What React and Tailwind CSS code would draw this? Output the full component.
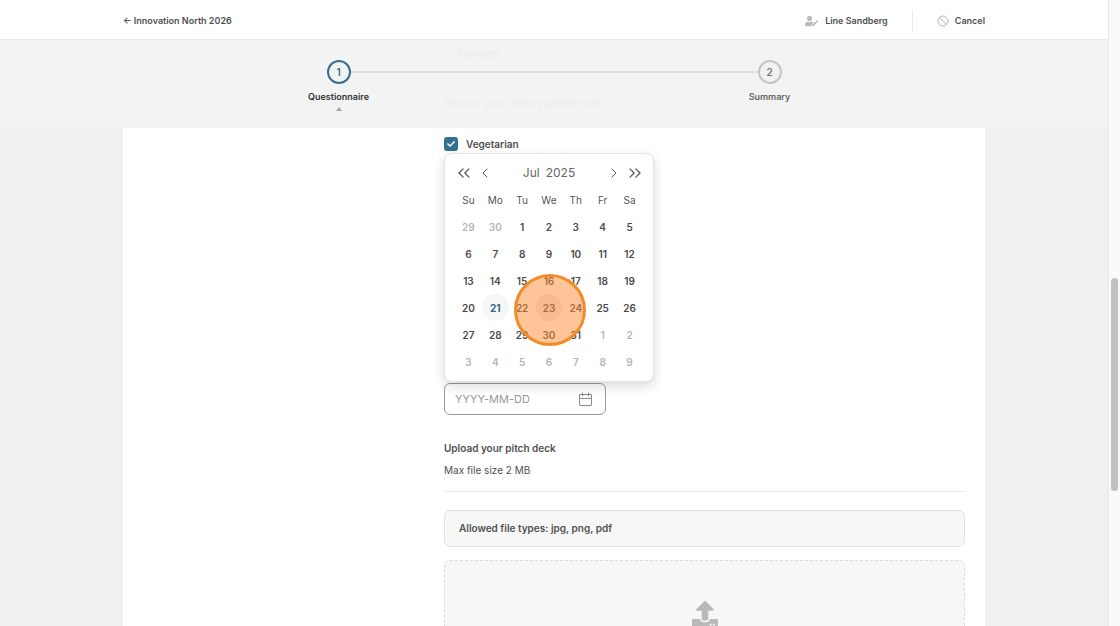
import React from "react";
import {
  Ban,
  ChevronDown,
  ChevronLeft,
  ChevronRight,
  ChevronsLeft,
  ChevronsRight,
} from "lucide-react";
import { FaCheck, FaUpload, FaUserEdit } from "react-icons/fa";

const WEEKDAYS = ["Su", "Mo", "Tu", "We", "Th", "Fr", "Sa"];

const WEEKS = [
  [29, 30, 1, 2, 3, 4, 5],
  [6, 7, 8, 9, 10, 11, 12],
  [13, 14, 15, 16, 17, 18, 19],
  [20, 21, 22, 23, 24, 25, 26],
  [27, 28, 29, 30, 31, 1, 2],
  [3, 4, 5, 6, 7, 8, 9],
];

function dayStyle(week, day) {
  const outside = (week === 0 && day > 7) || (week === 4 && day < 7) || week === 5;
  if (outside) return "font-semibold text-[#b4b4b4]";
  if (day === 21) return "font-bold bg-[#f6f6f6] text-[#2f6b8a]";
  if (day === 23) return "font-semibold bg-[#ededed] text-[#4a4a4a]";
  return "font-semibold text-[#4a4a4a]";
}

function TopBar() {
  return (
    <header className="h-10 shrink-0 border-b border-[#ececec] bg-white pt-0.5">
      <div className="mx-auto flex h-full max-w-[862px] items-center justify-between text-[9px] font-semibold text-[#505050]">
        <a href="#events">← Innovation North 2026</a>
        <div className="flex items-center">
          <button type="button" className="flex items-center gap-[7px] pr-6">
            <FaUserEdit className="h-3 w-[13px] text-[#b9b9b9]" />
            Line Sandberg
          </button>
          <button
            type="button"
            className="flex h-[22px] items-center gap-1.5 border-l border-[#ececec] pl-6"
          >
            <Ban className="size-3 text-[#b4b4b4]" strokeWidth={2} />
            Cancel
          </button>
        </div>
      </div>
    </header>
  );
}

function Stepper() {
  return (
    <nav className="absolute inset-x-0 top-0 z-10 h-[88px] bg-[#f2f2f2]/96" aria-label="Progress">
      <ol className="mx-auto grid max-w-[862px] grid-cols-2 pt-5 text-[9px] font-semibold">
        <li className="relative flex flex-col items-center">
          <span className="absolute top-[11px] left-1/2 h-0.5 w-full bg-[#dedede]" />
          <span className="relative flex size-6 items-center justify-center rounded-full border-2 border-[#34708f] bg-[#f2f2f2] text-[10px] text-[#34708f]">
            1
          </span>
          <span className="mt-[5px] leading-4 text-[#333]">Questionnaire</span>
          <svg viewBox="0 0 6 4" className="mt-0.5 h-1 w-1.5 fill-[#a5a5a5]" aria-hidden="true">
            <path d="M3 0 6 4H0z" />
          </svg>
        </li>
        <li className="relative flex flex-col items-center">
          <span className="flex size-6 items-center justify-center rounded-full border-2 border-[#c4c4c4] bg-[#f2f2f2] text-[10px] text-[#777]">
            2
          </span>
          <span className="mt-[5px] leading-4 text-[#666]">Summary</span>
        </li>
      </ol>
    </nav>
  );
}

function NavButton({ label, icon: Icon, size }) {
  return (
    <button
      type="button"
      aria-label={label}
      className="flex h-6 w-[21px] items-center justify-center text-[#555]"
    >
      <Icon className={"shrink-0 " + size} strokeWidth={1.5} />
    </button>
  );
}

function CalendarIcon() {
  return (
    <svg
      viewBox="0 0 15 15"
      className="size-[15px] fill-none stroke-[#8a8a8a]"
      strokeLinecap="round"
      aria-hidden="true"
    >
      <rect x="1.5" y="2.5" width="12" height="11" rx="0.5" />
      <path d="M1.5 6.5h12M4.5 1v3M10.5 1v3" />
    </svg>
  );
}

function CalendarPanel() {
  return (
    <div className="absolute bottom-full left-0 z-10 mb-px w-[210px] rounded-lg border border-[#e4e4e4] bg-white px-2.5 pt-[7px] pb-1.5 shadow-[0_4px_12px_rgba(0,0,0,0.16)]">
      <div className="flex items-center justify-between text-xs text-[#666]">
        <div className="-ml-0.5 flex">
          <NavButton label="Previous year" icon={ChevronsLeft} size="size-5" />
          <NavButton label="Previous month" icon={ChevronLeft} size="size-4" />
        </div>
        <div className="flex gap-1.5">
          <button type="button">Jul</button>
          <button type="button">2025</button>
        </div>
        <div className="-mr-0.5 flex">
          <NavButton label="Next month" icon={ChevronRight} size="size-4" />
          <NavButton label="Next year" icon={ChevronsRight} size="size-5" />
        </div>
      </div>
      <table className="mt-px w-full table-fixed text-center text-[10px]">
        <thead>
          <tr>
            {WEEKDAYS.map((d) => (
              <th key={d} scope="col" className="h-[27px] p-0 font-normal text-[#555]">
                {d}
              </th>
            ))}
          </tr>
        </thead>
        <tbody>
          {WEEKS.map((days, w) => (
            <tr key={w}>
              {days.map((d) => (
                <td key={d} className="p-0">
                  <button
                    type="button"
                    className={"block h-[27px] w-full rounded-full " + dayStyle(w, d)}
                  >
                    {d}
                  </button>
                </td>
              ))}
            </tr>
          ))}
        </tbody>
      </table>
      <span className="pointer-events-none absolute top-[120px] left-[69px] size-[72px] rounded-full border-3 border-[#f28c28] bg-[#ff8c32]/50" />
    </div>
  );
}

export default function App() {
  return (
    <div className="flex h-screen overflow-hidden bg-[#f0f0f0] font-['Inter',sans-serif] text-[#505050]">
      <div className="flex min-w-0 flex-1 flex-col">
        <TopBar />
        <main className="relative min-h-0 flex-1 overflow-hidden">
          <Stepper />
          <form className="mx-auto grid h-full max-w-[862px] grid-cols-[321px_1fr] bg-white pr-5">
            <div className="col-start-2 flex flex-col text-[10px] leading-4">
              <div className="relative">
                <select
                  aria-label="Country"
                  className="h-[26px] w-full appearance-none px-3 text-[11px] font-semibold"
                >
                  <option>Sweden</option>
                </select>
                <ChevronDown className="absolute top-2 right-3 size-2.5" />
              </div>
              <fieldset className="mt-[29px]">
                <legend className="font-semibold">Choose your dietary preferences</legend>
                <label className="mt-[25px] flex items-center gap-2 font-semibold">
                  <span className="relative flex size-[14px] items-center justify-center">
                    <input
                      type="checkbox"
                      defaultChecked
                      className="size-full appearance-none rounded-[3px] bg-[#34708f]"
                    />
                    <FaCheck className="pointer-events-none absolute size-2 text-white" />
                  </span>
                  Vegetarian
                </label>
              </fieldset>

              <div className="relative mt-[231px] w-[162px]">
                <CalendarPanel />
                <div className="flex h-8 items-center justify-between rounded-md border border-[#999] pr-3 pl-2.5">
                  <input
                    type="text"
                    aria-label="Date"
                    placeholder="YYYY-MM-DD"
                    className="w-24 bg-transparent text-[11px] outline-none placeholder:text-[#999]"
                  />
                  <CalendarIcon />
                </div>
              </div>

              <label htmlFor="deck" className="mt-[25px] font-semibold">
                Upload your pitch deck
              </label>
              <p className="mt-1.5">Max file size 2 MB</p>
              <hr className="mt-[13px] border-[#ececec]" />
              <p className="mt-[18px] rounded-md border border-[#e2e2e2] bg-[#f7f7f7] px-3.5 pt-[9px] pb-2.5 font-semibold">
                Allowed file types: jpg, png, pdf
              </p>
              <label
                htmlFor="deck"
                className="mt-[13px] flex h-[140px] shrink-0 justify-center rounded-md border border-dashed border-[#dcdcdc] bg-[#f7f7f7] pt-10"
              >
                <FaUpload className="size-[26px] text-[#b9b9b9]" />
                <input id="deck" type="file" className="sr-only" />
              </label>
            </div>
          </form>
        </main>
      </div>
      <div className="w-3 shrink-0 border-l border-[#e8e8e8] bg-[#fafafa] px-0.5 pt-[278px]">
        <div className="h-[213px] rounded-full bg-[#c1c1c1]" />
      </div>
    </div>
  );
}
